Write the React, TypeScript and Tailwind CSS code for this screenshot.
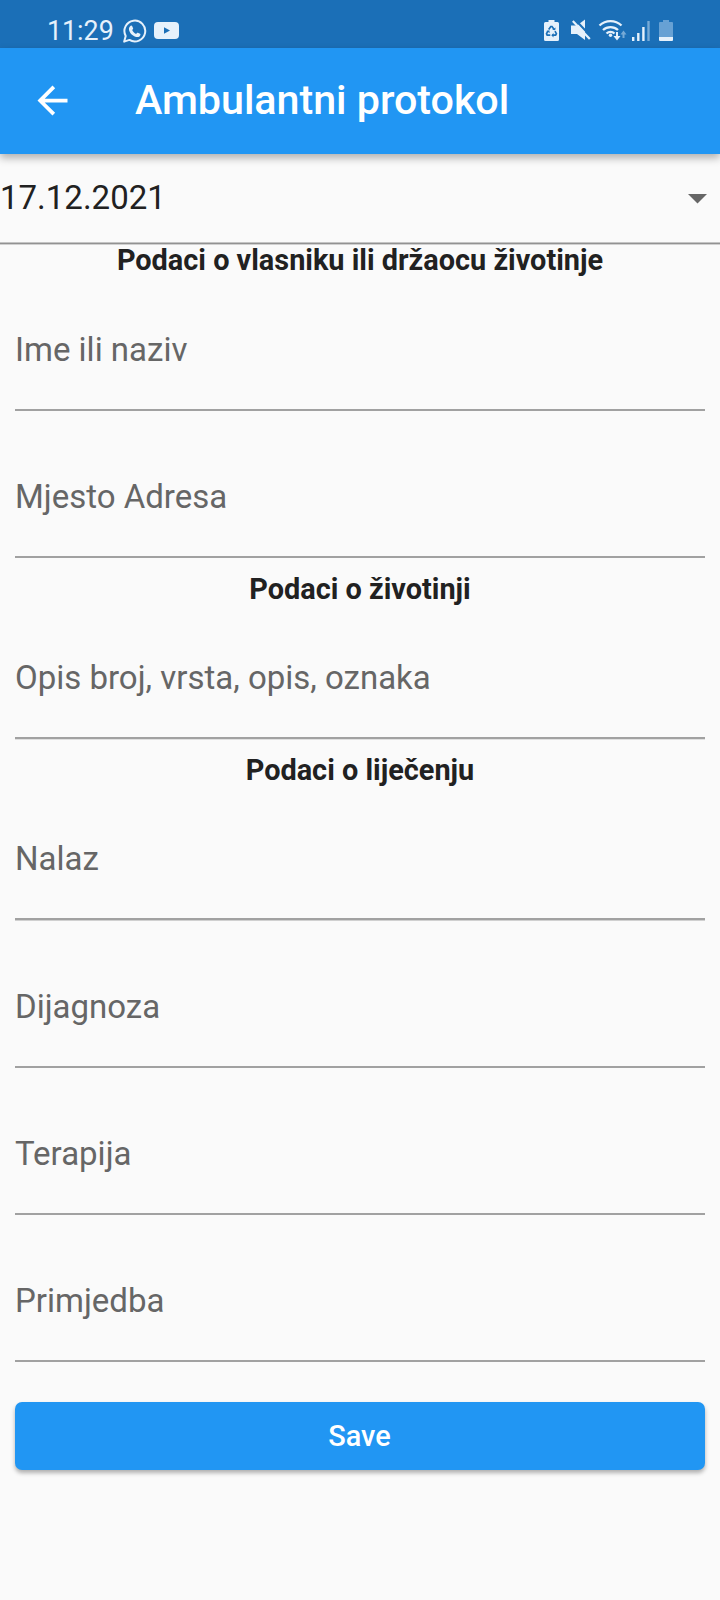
import React from "react";

function StatusBar() {
  return (
    <div className="flex h-12 items-start justify-between bg-[#1b6fb7] pl-[47px] pr-[46px] text-[#e6f1fb]">
      <div className="flex h-12 items-start">
        <span className="mt-[15px] w-[75px] whitespace-nowrap text-[26.8px] leading-8">11:29</span>
        <svg className="mt-[19px]" width="25" height="25" viewBox="0 0 25 25" fill="none">
          <path d="M2.2 22.6 3.7 17a10.4 10.4 0 1 1 3.7 3.9Z" stroke="currentColor" strokeWidth="2" strokeLinejoin="round" />
          <path d="M8.7 6.7c.5-.4 1.100-.3 1.400.3l1 2.200c.2.500-.2 1.100-.9 1.900.8 1.900 2 3 3.900 3.800.8-.8 1.200-1.400 1.800-1.200l2.200 1.100c.5.300.4.800.2 1.400-.6 1.600-2.300 2.200-4.200 1.700-3.700-1-6.500-3.900-7.100-7.100-.3-1.700.5-3.300 1.700-4.100Z" fill="currentColor" />
        </svg>
        <svg className="ml-[7px] mt-[22px]" width="25" height="17" viewBox="0 0 25 17">
          <rect width="25" height="17" rx="4" fill="currentColor" />
          <path d="m10 5.200 6 3.300-6 3.300Z" fill="#1b6fb7" />
        </svg>
      </div>
      <svg className="mt-[18px]" width="132" height="25" viewBox="542 18 132 25" fill="none">
        <path d="M548.500 20h6v2h3q1.500 0 1.500 1.500v16q0 1.500-1.500 1.500h-12q-1.500 0-1.500-1.500v-16q0-1.500 1.500-1.500h3Z" fill="currentColor" />
        <g stroke="#1b6fb7" strokeWidth="1.700">
          <path d="m548.700 29.500 2.100-3h1.200l2 2.800M555 31.200l1.400 2.500-.8 1.500h-3M550.300 35.200h-3.100l-.7-1.500 1.500-2.700" />
        </g>
        <path d="m552.200 29.800 3 .5.4-2.800ZM553.500 33l-2.200 2.200 2.200 2.200ZM546.300 31l3-.8.5 2.800Z" fill="#1b6fb7" />
        <path d="M571 25.500h6l8-6V40l-8-6h-6Z" fill="currentColor" />
        <path d="m574.500 19 17 18" stroke="#1b6fb7" strokeWidth="2" />
        <path d="m572.800 21 17 18" stroke="currentColor" strokeWidth="2.200" />
        <g stroke="currentColor" strokeWidth="2.300">
          <path d="M599.500 25.500a16 16 0 0 1 22 0M603 30a11 11 0 0 1 15 0M606.500 33.500a6 6 0 0 1 8 0" />
          <path d="M617 32v6" strokeWidth="2" />
        </g>
        <path d="M613.500 36h7l-3.500 4.500Z" fill="currentColor" />
        <circle cx="610.500" cy="35.200" r="1.700" fill="currentColor" />
        <path d="M623.500 38v-5" stroke="#76aad6" strokeWidth="2" />
        <path d="M620.500 34.500h6l-3-4Z" fill="#76aad6" />
        <path d="M633.200 37v4M638.300 33v8M643.400 27v14" stroke="currentColor" strokeWidth="2.400" />
        <path d="M648.500 21v20" stroke="#76aad6" strokeWidth="2.400" />
        <path d="M663 20h6v2h3q1 0 1 1v14h-14V23q0-1 1-1h3Z" fill="#67a1d4" />
        <path d="M659 37h14v3q0 1-1 1h-12q-1 0-1-1Z" fill="currentColor" />
      </svg>
    </div>
  );
}

function AppBar() {
  return (
    <header className="relative z-10 flex h-[106px] items-center bg-[#2196f3] pb-[2px] pl-[30px] text-white shadow-[0_4px_8px_rgba(0,0,0,0.3)]">
      <svg className="mt-[1px]" width="45" height="45" viewBox="0 0 24 24" fill="currentColor">
        <path d="M20 11H7.830l5.590-5.590L12 4l-8 8 8 8 1.410-1.410L7.830 13H20v-2z" />
      </svg>
      <h1 className="ml-[60px] whitespace-nowrap text-[41.25px] font-medium leading-[48px] tracking-[-0.04px]">Ambulantni protokol</h1>
    </header>
  );
}

function SoftLine() {
  return (
    <div>
      <div className="h-px bg-[#c4c4c4]" />
      <div className="h-px bg-[#929292]" />
      <div className="h-px bg-[#d0d0d0]" />
    </div>
  );
}

function Field({ label, size }: { label: string; size: string }) {
  return (
    <label className={`mx-[15px] flex flex-col justify-end border-b-2 border-[#a1a1a1] ${size}`}>
      <span className="mb-[39px] whitespace-nowrap text-[33px] leading-[40px] text-[#666]">{label}</span>
    </label>
  );
}

function Section({ title, size }: { title: string; size: string }) {
  return (
    <h2 className={`flex items-end justify-center whitespace-nowrap text-[28.875px] font-bold leading-[34px] text-[#212121] ${size}`}>
      {title}
    </h2>
  );
}

export default function App() {
  return (
    <main className="h-[1600px] w-[720px] overflow-hidden bg-[#fafafa] font-['Roboto',sans-serif]">
      <StatusBar />
      <AppBar />
      <div className="flex h-[88px] items-center justify-between pr-[13px]">
        <span className="text-[33px] leading-[40px] text-[#212121]">17.12.2021</span>
        <svg className="mt-[2px]" width="19" height="10" viewBox="0 0 19 10">
          <path d="M0 0h19L9.500 9.500Z" fill="#666" />
        </svg>
      </div>
      <SoftLine />
      <Section title="Podaci o vlasniku ili držaocu životinje" size="h-[32px]" />
      <Field label="Ime ili naziv" size="h-[134px]" />
      <Field label="Mjesto Adresa" size="h-[147px]" />
      <Section title="Podaci o životinji" size="h-[48px]" />
      <Field label="Opis broj, vrsta, opis, oznaka" size="h-[133px] shadow-[0_1px_0_#e0e0e0]" />
      <Section title="Podaci o liječenju" size="h-[48px]" />
      <Field label="Nalaz" size="h-[133px] shadow-[0_1px_0_#d0d0d0]" />
      <Field label="Dijagnoza" size="h-[148px]" />
      <Field label="Terapija" size="h-[147px]" />
      <Field label="Primjedba" size="h-[147px]" />
      <button className="mx-[15px] mt-[40px] flex h-[68px] w-[690px] items-center justify-center rounded-[7px] bg-[#2196f3] pr-px pt-[2px] text-[28.875px] font-medium text-white shadow-[0_3px_4px_rgba(0,0,0,0.3)]">
        Save
      </button>
    </main>
  );
}
